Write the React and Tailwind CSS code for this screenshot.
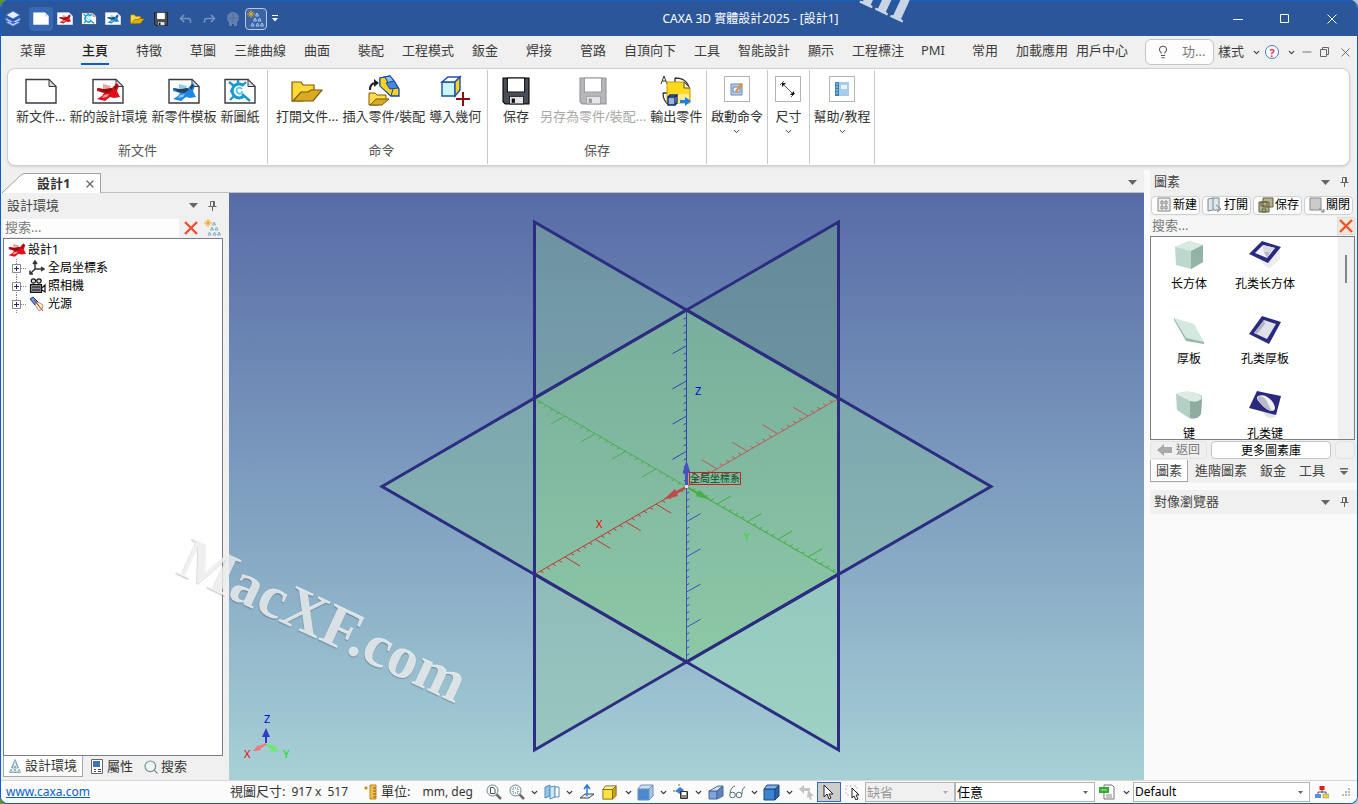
import { useState } from "react";
import { ChevronDown, Forward, Lightbulb, Minus, Reply, Search, X } from "lucide-react";

const TABS = [
  "菜單", "主頁", "特徵", "草圖", "三維曲線", "曲面", "裝配", "工程模式", "鈑金", "焊接", "管路",
  "自頂向下", "工具", "智能設計", "顯示", "工程標注", "PMI", "常用", "加載應用", "用戶中心",
];

/* ---------- small drawings ---------- */

function Page({ children, w = 32, h = 26, line = "#3a3a40" }) {
  return (
    <svg width={w} height={h} viewBox="0 0 32 26" fill="none">
      <path d="M1 1.5h23l7 7V25H1z" fill="#fff" stroke={line} strokeWidth="1.4" />
      <path d="M24 1.5v7h7z" fill="#d8dae0" stroke={line} strokeWidth="1" />
      {children}
    </svg>
  );
}

function Part({ main, dark, light }) {
  return (
    <g>
      <path d="M5 10l6 1 9-1 5-5 2 3-2 5 3 6-6 1-4-1-5 4-8-2 5-3 2-3-7-2z" fill={main} />
      <path d="M5 10l6 1 8-1 2 2-5 3-6-1z" fill={dark} />
      <path d="M11 6l8 2-1 2-7 1z" fill={light} />
      <path d="M12 17l5-1-2 3-5 1z" fill={light} />
      <path d="M24 6l2 2-3 4-1-3z" fill={dark} />
    </g>
  );
}

function RedPart() {
  return <Part main="#e01018" dark="#8c0f16" light="#f6a0a0" />;
}

function BluePart() {
  return <Part main="#1e88e8" dark="#2b4358" light="#8ccbf5" />;
}

function Gear() {
  return (
    <g stroke="#1a9bd0" fill="none">
      <path d="M19 7a7 7 0 1 0 1 11" strokeWidth="3" />
      <path d="M5 4l5 4M22 4l-4 4M6 22l4-4M26 23l-8-7M14 2v4M6 13h3" strokeWidth="2.4" />
      <path d="M18 11c-3-3-7 0-5 3s5 2 5-1" strokeWidth="1.8" stroke="#56c8ea" />
    </g>
  );
}

function Folder({ w = 32, h = 24 }) {
  return (
    <svg width={w} height={h} viewBox="0 0 32 24">
      <path d="M1 22V3h9l2 3h11v7L12 22z" fill="#ffd83a" stroke="#7a5b00" strokeWidth="1.2" />
      <path d="M2 22l8-9h7l3-2h11l-9 11z" fill="#d9ab20" stroke="#7a5b00" strokeWidth="1.2" />
    </svg>
  );
}

function Floppy({ size = 28, body = "#4b5058", line = "#0d0d10" }) {
  return (
    <svg width={size} height={size} viewBox="0 0 26 26">
      <path d="M1 1h24v24H3l-2-2z" fill={body} stroke={line} strokeWidth="1.2" />
      <path d="M5 1h16v13H5z" fill="#fff" stroke={line} />
      <path d="M7 18h13v7H7z" fill="#e4e6ea" stroke={line} strokeWidth=".8" />
      <path d="M9 20h3v4H9z" fill={line} />
    </svg>
  );
}

function InsertPart() {
  return (
    <svg width="32" height="32" viewBox="0 0 32 32">
      <path d="M2 15c0-5 2-7 6-7" fill="none" stroke="#222" strokeWidth="2" />
      <path d="M6 4l5 4-5 4z" fill="#222" />
      <path d="M12 3l10-2 4 5 5 8v7h-8L12 11z" fill="#ffd21e" stroke="#1148a8" strokeWidth="1.3" />
      <path d="M12 3l5-1 8 12-2 7L12 11z" fill="#ffd21e" stroke="#1148a8" />
      <path d="M17 2l5-1 4 5-6 2z" fill="#8fbcf4" stroke="#1148a8" />
      <path d="M18 8l8-2 4 7-8 1z" fill="#4a88e0" stroke="#1148a8" />
      <path d="M1 30V18h6l2 2h9v5l-8 5z" fill="#ffdd4a" stroke="#7a5b00" />
      <path d="M2 30l6-6h13l-7 6z" fill="#d9ab20" stroke="#7a5b00" />
    </svg>
  );
}

function ImportGeometry() {
  return (
    <svg width="32" height="32" viewBox="0 0 32 32">
      <path d="M3 7h13v14H3z" fill="#c8f6fb" stroke="#1e4fa8" strokeWidth="1.4" />
      <path d="M3 7l6-5h12l-5 5z" fill="#fff" stroke="#1e4fa8" strokeWidth="1.4" />
      <path d="M16 7l5-5v13l-5 6z" fill="#ffd21e" stroke="#1e4fa8" strokeWidth="1.4" />
      <path d="M24 17v14M17 24h14" stroke="#8c0f16" strokeWidth="2" />
    </svg>
  );
}

function ExportPart() {
  return (
    <svg width="32" height="32" viewBox="0 0 32 32">
      <path d="M1 9L4 1l3 8M2 6h4" fill="none" stroke="#333" />
      <path d="M15 3c8 0 13 4 14 10M3 18c0 6 3 10 6 12M3 18h4M15 3v4" fill="none" stroke="#333" strokeWidth="1.3" />
      <path d="M7 7h17l6 6v15H7z" fill="#ffd91c" stroke="#c79a00" />
      <path d="M8 19h21v9H8z" fill="#ffec90" />
      <path d="M24 7v6h6z" fill="#fff2a0" stroke="#555" />
      <path d="M8 22h7v8H8zM8 22l2-2h7l-2 2M17 20v8l-2 2" fill="#8fb5ea" stroke="#15265c" strokeWidth="1.3" />
      <path d="M20 25h5v-3l6 4-6 5v-3h-5z" fill="#1c7df0" />
    </svg>
  );
}

function Framed({ children }) {
  return (
    <span className="mb-1 flex size-[26px] items-center justify-center border border-[#b4b4b4] bg-white">
      {children}
    </span>
  );
}

function Hierarchy({ line = "#7fa7b5" }) {
  return (
    <svg width="12" height="14" viewBox="0 0 12 14" fill="none" stroke={line}>
      <path d="M6 .5L7.500 4h-3zM4.500 4L2.500 9M7.500 4l2 5M4.500 5.500L6 9H3zM7.500 5.500L9 9H6zM2 10l1.500 3.500h-3zM6 10l1.500 3.500h-3zM10 10l1.500 3.500h-3z" />
    </svg>
  );
}

function NewHierarchy({ line }) {
  return (
    <svg width="18" height="18" viewBox="0 0 18 18" fill="none">
      <path d="M4 0v8M0 4h8M1.500 1.500l5 5M6.500 1.500l-5 5" stroke="#e8a820" />
      <path d="M10 3l1.500 3h-3zM8 8l1.500 3h-3zM12.500 8l1.500 3h-3zM5.500 13l1.500 3H4zM10.500 13l1.500 3H9zM15 13l1.500 3h-3z" stroke={line} />
    </svg>
  );
}

function Caret({ className = "" }) {
  return (
    <svg className={className} width="9" height="5" viewBox="0 0 9 5">
      <path d="M0 0h9L4.500 5z" fill="#666" />
    </svg>
  );
}

function Pin() {
  return (
    <svg width="9" height="10" viewBox="0 0 9 10" fill="none" stroke="#666">
      <path d="M2.500.5h4v5M5.500.5v5M2.500.5v5M.5 5.500h8M4.500 5.500V10" />
    </svg>
  );
}

function Cube({ front, top, side, line, size = 17 }) {
  return (
    <svg width={size} height={size} viewBox="0 0 17 17">
      <path d="M1 5h11v11H1z" fill={front} stroke={line} />
      <path d="M1 5l3-4h12l-4 4z" fill={top} stroke={line} />
      <path d="M12 5l4-4v11l-4 4z" fill={side} stroke={line} />
    </svg>
  );
}

function Cross() {
  return (
    <svg width="14" height="14" viewBox="0 0 14 14">
      <path d="M1 1l12 12M13 1L1 13" stroke="#f4502f" strokeWidth="2.400" />
    </svg>
  );
}

/* ---------- title bar and menu ---------- */

function TitleBar() {
  return (
    <header className="flex h-9 shrink-0 items-center border-t border-[#1560c0] bg-[#2b579a] pl-1">
      <svg width="16" height="18" viewBox="0 0 16 18" className="mr-2">
        <path d="M8 1l7 4-7 4-7-4z" fill="#e8f0ff" stroke="#3c6df0" />
        <path d="M1 8l7 4 7-4v2l-7 4-7-4zM1 12l7 4 7-4" fill="#dfe9ff" stroke="#5a85f5" />
      </svg>
      <div className="flex items-center">
        <button aria-label="新文件" className="flex h-6 w-6 items-center justify-center rounded bg-[#3867b4]">
          <Page w={16} h={13} line="#dfe3ea" />
        </button>
        <button aria-label="新的設計環境" className="flex h-6 w-6 items-center justify-center">
          <Page w={16} h={13} line="#dfe3ea"><RedPart /></Page>
        </button>
        <button aria-label="新圖紙" className="flex h-6 w-6 items-center justify-center">
          <Page w={16} h={13}><Gear /></Page>
        </button>
        <button aria-label="新零件模板" className="flex h-6 w-6 items-center justify-center">
          <Page w={16} h={13} line="#dfe3ea"><BluePart /></Page>
        </button>
        <button aria-label="打開文件" className="flex h-6 w-6 items-center justify-center">
          <Folder w={15} h={12} />
        </button>
        <button aria-label="保存" className="flex h-6 w-6 items-center justify-center">
          <Floppy size={14} />
        </button>
        <button aria-label="撤銷" className="flex h-6 w-6 items-center justify-center text-[#7392c6]">
          <Reply size={15} strokeWidth={2.500} />
        </button>
        <button aria-label="重做" className="flex h-6 w-6 items-center justify-center text-[#7392c6]">
          <Forward size={15} strokeWidth={2.500} />
        </button>
        <button aria-label="渲染" className="flex h-6 w-6 items-center justify-center">
          <svg width="14" height="14" viewBox="0 0 14 14" fill="#6580b0">
            <circle cx="7" cy="6" r="6" />
            <path d="M3 9h3v5H3zM8 9h3v5H8z" />
            <path d="M7 1v9M1 6h12" stroke="#4a6ba5" />
          </svg>
        </button>
        <button aria-label="設計樹" className="flex size-[22px] items-center justify-center rounded border border-[#b9c8e4] bg-[#3a64a4]">
          <NewHierarchy line="#a8c8ec" />
        </button>
        <button aria-label="自定義" className="flex h-6 w-4 items-center justify-center">
          <svg width="6" height="7" viewBox="0 0 6 7" fill="#fff">
            <path d="M0 0h6v1H0zM0 3h6L3 6.500z" />
          </svg>
        </button>
      </div>
      <h1 className="grow pl-1 text-center text-[12px] text-white">CAXA 3D 實體設計2025 - [設計1]</h1>
      <div className="flex justify-end pr-0.5 text-white">
        <button aria-label="最小化" className="flex h-8 w-[47px] items-center justify-center">
          <svg width="10" height="10"><path d="M0 5.500h10" stroke="#fff" /></svg>
        </button>
        <button aria-label="最大化" className="flex h-8 w-[47px] items-center justify-center">
          <svg width="10" height="10"><path d="M.5.5h8v8h-8z" fill="none" stroke="#fff" /></svg>
        </button>
        <button aria-label="關閉" className="flex h-8 w-[47px] items-center justify-center">
          <svg width="10" height="10"><path d="M.5.5l9 9M9.500.5l-9 9" stroke="#fff" /></svg>
        </button>
      </div>
    </header>
  );
}

function tabWidth(name) {
  if (name === "PMI") return "w-[50px]";
  return name.length > 2 ? "w-[60px]" : "w-[54px]";
}

function MenuBar() {
  const [active, setActive] = useState("主頁");
  return (
    <nav className="flex h-8 shrink-0 items-center pl-[5px] text-[13px] text-[#3c3c3c]">
      {TABS.map((name) => (
        <button
          key={name}
          onClick={() => setActive(name)}
          className={`flex h-7 shrink-0 items-center justify-center whitespace-nowrap ${tabWidth(name)} ${
            name === "菜單" ? "mr-2" : ""
          } ${active === name ? "font-medium text-[#222]" : ""}`}
        >
          <span
            className={`flex h-[26px] items-center border-b-2 px-px ${
              active === name ? "border-[#0a5fc8]" : "border-transparent"
            }`}
          >
            {name}
          </span>
        </button>
      ))}
      <div className="ml-auto flex items-center pr-1">
        <button className="flex h-[26px] w-[69px] items-center gap-3 rounded-md border border-[#c4c4c4] bg-[#fdfdfd] pl-2.5 text-[#777]">
          <Lightbulb size={14} strokeWidth={1.800} className="shrink-0 text-[#555]" />
          功...
        </button>
        <button className="flex items-center gap-2 pl-1">
          樣式
          <ChevronDown size={9} strokeWidth={3} />
        </button>
        <button aria-label="幫助" className="ml-1 flex items-center gap-2">
          <span className="flex size-[14px] items-center justify-center rounded-full border border-[#4a78c0] bg-white text-[11px] font-bold leading-none text-[#e8323c]">
            ?
          </span>
          <ChevronDown size={9} strokeWidth={3} />
        </button>
        <button aria-label="最小化文檔" className="ml-1 text-[#666]"><Minus size={14} strokeWidth={1.500} /></button>
        <button aria-label="還原文檔" className="ml-1.5">
          <svg width="10" height="10" fill="none" stroke="#666">
            <path d="M.5 2.500h6v7h-6zM2.500 2.500v-2h6v7h-2" />
          </svg>
        </button>
        <button aria-label="關閉文檔" className="ml-2 text-[#666]"><X size={15} strokeWidth={1.500} /></button>
      </div>
    </nav>
  );
}

/* ---------- ribbon ---------- */

function RibbonButton({ icon, label, disabled, menu }) {
  return (
    <button
      disabled={disabled}
      className={`flex shrink-0 flex-col items-center whitespace-nowrap ${disabled ? "text-[#a8a8a8]" : "text-[#333]"}`}
    >
      <span className="flex h-8 items-center justify-center">{icon}</span>
      <span className="leading-[18px]">{label}</span>
      {menu && <ChevronDown size={9} strokeWidth={2.500} className="mt-0.5" />}
    </button>
  );
}

function RibbonGroup({ title, children, className }) {
  return (
    <section className={`flex shrink-0 flex-col justify-between border-r border-[#c9c9c9] pt-[5px] pb-[5px] ${className}`}>
      <div className="flex gap-1">{children}</div>
      {title && <h2 className="text-center leading-[18px] text-[#555]">{title}</h2>}
    </section>
  );
}

function Ribbon() {
  return (
    <div className="mr-[7px] ml-1.5 flex h-[98px] shrink-0 rounded-lg border border-[#cfcfcf] bg-white py-px text-[13px] shadow-sm">
      <RibbonGroup title="新文件" className="w-[260px] px-2">
        <RibbonButton icon={<Page />} label="新文件..." />
        <RibbonButton icon={<Page><RedPart /></Page>} label="新的設計環境" />
        <RibbonButton icon={<Page><BluePart /></Page>} label="新零件模板" />
        <RibbonButton icon={<Page><Gear /></Page>} label="新圖紙" />
      </RibbonGroup>
      <RibbonGroup title="命令" className="w-[220px] pl-2">
        <RibbonButton icon={<Folder />} label="打開文件..." />
        <RibbonButton icon={<InsertPart />} label="插入零件/裝配" />
        <RibbonButton icon={<ImportGeometry />} label="導入幾何" />
      </RibbonGroup>
      <RibbonGroup title="保存" className="w-[219px]">
        <div className="flex gap-1 pl-3.5">
          <span className="flex pr-1.5"><RibbonButton icon={<Floppy />} label="保存" /></span>
          <RibbonButton icon={<Floppy body="#b5b7ba" line="#9a9a9c" />} label="另存為零件/裝配..." disabled />
          <RibbonButton icon={<ExportPart />} label="輸出零件" />
        </div>
      </RibbonGroup>
      <RibbonGroup className="w-[61px] items-center">
        <RibbonButton
          menu
          label="啟動命令"
          icon={
            <Framed>
              <svg width="16" height="16" viewBox="0 0 16 16">
                <path d="M2 3h11v11H2z" fill="#b8cdec" stroke="#6b86b5" />
                <path d="M4 6h7v5H4z" fill="#e8f0fa" stroke="#6b86b5" />
                <path d="M6 10l6-8 2 1-6 8z" fill="#e8902a" />
              </svg>
            </Framed>
          }
        />
      </RibbonGroup>
      <RibbonGroup className="w-[42px] items-center">
        <RibbonButton
          menu
          label="尺寸"
          icon={
            <Framed>
              <svg width="16" height="16" viewBox="0 0 16 16" stroke="#555" fill="none">
                <path d="M3 3l10 10M0 4l4-4M11 16l4-4" />
                <path d="M2 2h4L2 6zM14 14h-4l4-4z" fill="#111" stroke="none" />
              </svg>
            </Framed>
          }
        />
      </RibbonGroup>
      <RibbonGroup className="w-[65px] items-center">
        <RibbonButton
          menu
          label="幫助/教程"
          icon={
            <Framed>
              <svg width="16" height="16" viewBox="0 0 16 16">
                <path d="M1 1h14v14H1z" fill="#a6cdea" />
                <path d="M1 1h4v14H1z" fill="#3d80b8" />
                <path d="M7 4h6v4H7z" fill="#e8f4fc" />
                <path d="M2 3h2M2 6h2M2 9h2M2 12h2" stroke="#c8e0f0" />
              </svg>
            </Framed>
          }
        />
      </RibbonGroup>
    </div>
  );
}

/* ---------- left panel ---------- */

function DocTabs() {
  return (
    <div className="flex h-5 shrink-0 items-stretch">
      <svg width="24" height="20" viewBox="0 0 24 20" className="shrink-0">
        <path d="M1 20L20 2q2-1.500 4-1.500V20z" fill="#fff" />
        <path d="M1 20L20 2q2-1.500 4-1.500" fill="none" stroke="#a0a0a0" />
      </svg>
      <div className="flex w-[76px] items-center justify-between border-t border-r border-[#a0a0a0] bg-white pr-1 pl-3 text-[13px] font-bold text-[#333]">
        設計1
        <button aria-label="關閉設計1"><X size={12} strokeWidth={2.500} className="text-[#666]" /></button>
      </div>
      <div className="flex grow items-center justify-end border-b border-[#c0c0c0] pr-[7px]"><Caret /></div>
    </div>
  );
}

function PanelHeader({ title, className }) {
  return (
    <div className={`flex shrink-0 items-center ${className}`}>
      <h2 className="grow text-[13px] text-[#444]">{title}</h2>
      <button aria-label={`${title}選單`} className="mr-2.5"><Caret /></button>
      <button aria-label={`固定${title}`} className="mr-1.5"><Pin /></button>
    </div>
  );
}

const TREE = [
  {
    name: "全局坐標系",
    icon: (
      <svg width="16" height="16" viewBox="0 0 16 16" fill="none" stroke="#333" strokeWidth="1.500">
        <path d="M6 1v8h9M6 9l-5 5M4 4l2-3 2 3M12 7l3 2-3 2M1 10.500V14h3" />
      </svg>
    ),
  },
  {
    name: "照相機",
    icon: (
      <svg width="17" height="16" viewBox="0 0 17 16" fill="none" stroke="#111" strokeWidth="1.200">
        <circle cx="4.500" cy="3" r="2.200" fill="#ddd" />
        <circle cx="10" cy="3" r="2.200" fill="#ddd" />
        <path d="M1.500 6.500h11v8h-11z" fill="#8a8a98" />
        <path d="M13 10l3-3v7l-3-2M3 9h8M3 12h8" />
      </svg>
    ),
  },
  {
    name: "光源",
    icon: (
      <svg width="16" height="16" viewBox="0 0 16 16">
        <path d="M1 3l3-2 5 5-3 3z" fill="#6a9cd8" stroke="#1d3a70" />
        <path d="M6 9l3-3 5 3q1 4-4 6z" fill="#fbeec0" stroke="#999" />
        <path d="M5 4l9 11" stroke="#d02020" />
      </svg>
    ),
  },
];

function DesignPanel() {
  return (
    <aside className="flex w-[228px] shrink-0 flex-col pr-1.5 pl-0.5 text-[#222]">
      <PanelHeader title="設計環境" className="h-[25px] pl-1" />
      <div className="flex h-5 shrink-0 items-center">
        <input
          aria-label="搜索設計環境"
          placeholder="搜索..."
          className="h-[18px] w-0 grow bg-[#fdfdfd] px-0.5 text-[13px] outline-none placeholder:text-[#777]"
        />
        <button aria-label="清除" className="flex w-6 justify-center"><Cross /></button>
        <button aria-label="新建" className="flex w-5 justify-center"><NewHierarchy line="#7fb0c0" /></button>
      </div>
      <ul className="grow border border-[#7d7d8a] bg-white pt-0.5 pl-1 text-[12px] text-black">
        <li className="flex h-[18px] items-center gap-0.5">
          <svg width="18" height="16" viewBox="4 4 24 20"><RedPart /></svg>
          設計1
        </li>
        {TREE.map((node) => (
          <li key={node.name} className="flex h-[18px] items-center pl-1">
            <button aria-label={`展開${node.name}`} className="mr-0.5">
              <svg width="15" height="18" viewBox="0 0 15 18" fill="none">
                <path d="M4.500 0v5M4.500 13v5M9 9.500h6" stroke="#888" strokeDasharray="1 1" />
                <path d="M.5 5.500h8v8h-8z" fill="#fff" stroke="#8a8a8a" />
                <path d="M2 9.500h5M4.500 7v5" stroke="#222d78" />
              </svg>
            </button>
            <span className="mr-0.5 flex w-[17px]">{node.icon}</span>
            {node.name}
          </li>
        ))}
      </ul>
      <div className="flex h-6 shrink-0 items-start text-[13px] text-[#333]">
        <button className="flex h-[21px] items-center gap-1 border border-t-0 border-[#a8a8a8] bg-white px-[5px]">
          <Hierarchy />
          設計環境
        </button>
        <button className="flex h-[21px] items-center gap-1 pl-2">
          <svg width="12" height="15" viewBox="0 0 12 15" fill="none">
            <path d="M.5.5h11v14H.5z" fill="#fff" stroke="#666" />
            <path d="M2 2h7v6H2z" fill="#3c72b8" />
            <path d="M3 10.500h2M7 10.500h3M3 12.500h2M7 12.500h3" stroke="#444" />
          </svg>
          屬性
        </button>
        <button className="flex h-[21px] items-center gap-0.5 pl-2.5">
          <Search size={16} className="fill-[#eef6f4] text-[#7a8f90]" strokeWidth={1.800} />
          搜索
        </button>
      </div>
    </aside>
  );
}

/* ---------- 3D view ---------- */

// Screen centre of the scene and the projected length of one major division.
const CX = 686.5;
const CY = 486.5;
const AXES = [
  { color: "#c05858", step: [30.4, -17.6], tick: [-15, -9] },
  { color: "#c03838", step: [-30.4, 17.6], tick: [15, 9] },
  { color: "#4caf50", step: [-30.4, -17.6], tick: [-14, 8] },
  { color: "#3cb03c", step: [30.4, 17.6], tick: [14, -8] },
  { color: "#3540b8", step: [0, -35.2], tick: [-14, 8] },
  { color: "#4050c0", step: [0, 35.2], tick: [14, -8] },
];

function axisPath({ step, tick }) {
  let d = `M${CX} ${CY}l${step[0] * 5} ${step[1] * 5}`;
  for (let i = 1; i < 25; i++) {
    const k = i % 5 === 0 ? 1 : 0.2;
    d += `M${CX + (step[0] * i) / 5} ${CY + (step[1] * i) / 5}l${tick[0] * k} ${tick[1] * k}`;
  }
  return d;
}

function Viewport() {
  return (
    <main className="min-w-0 grow bg-linear-to-b from-[#586ba6] to-[#a7d1d6]">
      <svg className="h-full w-full" viewBox="229 193 915 587" preserveAspectRatio="xMidYMid slice">
        <defs>
          <linearGradient id="core" x1="0" y1="0" x2="0" y2="1">
            <stop offset="0" stopColor="#78ae9c" />
            <stop offset="1" stopColor="#8dc8a6" />
          </linearGradient>
        </defs>
        <path d="M534 222L686.500 310L534 398z" fill="#7cae9e" fillOpacity=".55" />
        <path d="M838.500 222L686.500 310L838.500 398z" fill="#6a9694" fillOpacity=".7" />
        <path d="M534 398L382 486.500L534 574zM838.500 398L991 486.500L838.500 574z" fill="#85bba6" fillOpacity=".55" />
        <path d="M534 574L534 750L686.500 662z" fill="#92c4b0" fillOpacity=".6" />
        <path d="M838.500 574L838.500 750L686.500 662z" fill="#9ad4bc" fillOpacity=".7" />
        <path d="M686.500 310L838.500 398V574L686.500 662L534 574V398z" fill="url(#core)" />
        {AXES.map((axis, i) => (
          <path key={i} d={axisPath(axis)} stroke={axis.color} fill="none" />
        ))}
        <g fill="none" stroke="#2c2c80" strokeWidth="3">
          <path d="M534.500 222L838.500 398V750L534.500 574z" />
          <path d="M838.500 222L534.500 398V750L838.500 574z" />
          <path d="M382 486.500L686.500 310L991 486.500L686.500 662z" />
        </g>
        <path d="M685 486V473h-2.500l4-13 4 13H688v13z" fill="#4a50c0" />
        <path d="M686 486l-10 5-1-2-12 11 15-4-1-2 10-6z" fill="#c04848" />
        <path d="M687 486l11 6 1-2 12 10-15-4 1-2-11-6z" fill="#48b048" />
        <path d="M685 485h3v3h-3z" fill="#e8e0f8" />
        <path d="M689.500 472.500h51v12h-51z" fill="none" stroke="#c82020" />
        <text x="690" y="482" fontSize="10" fill="#0c4a1c">全局坐標系</text>
        <g fontSize="11">
          <text x="695" y="395" fill="#0000e0">Z</text>
          <text x="596" y="528" fill="#f00000">X</text>
          <text x="744" y="540" fontSize="9" fill="#20e020">Y</text>
          <text x="264" y="723" fill="#0000e0">Z</text>
          <text x="244" y="758" fill="#f00000">X</text>
          <text x="283" y="758" fill="#10e010">Y</text>
        </g>
        <path d="M265 743v-6h-3l4-9 4 9h-3v6z" fill="#3838c8" />
        <path d="M266 743l-7 3-1-1-5 6 8-1-1-1 6-4z" fill="#f07878" />
        <path d="M266 743l7 3 1-1 5 7-9-1 1-2-5-3z" fill="#70e870" />
      </svg>
    </main>
  );
}

/* ---------- right panel ---------- */

const SHAPES = [
  {
    name: "长方体",
    art: (
      <g>
        <path d="M2 7l14-6 14 4v17l-12 7L3 25z" fill="#bcd8cc" />
        <path d="M2 7l14-6 14 4-12 6z" fill="#d8ebe2" />
        <path d="M18 11l12-6v17l-12 7z" fill="#93b3a6" />
      </g>
    ),
  },
  {
    name: "孔类长方体",
    art: (
      <g>
        <path d="M10 20l10 9 11-10V9z" fill="#ececf0" />
        <path d="M0 14L13 1l19 6-13 16z" fill="#29297e" />
        <path d="M6 13l8-8 12 3-8 10z" fill="#f2f2f8" />
        <path d="M14 5l1 7 3 6 3-6 5-4z" fill="#b4b6c8" />
        <path d="M14 5l1 7 6 0 5-4z" fill="#d6d8e4" />
      </g>
    ),
  },
  {
    name: "厚板",
    art: (
      <g>
        <path d="M1 3l20 6 10 18v2L13 25z" fill="#d3e8de" />
        <path d="M1 3l12 20 18 4v2l-18-3L1 5z" fill="#98b8aa" />
      </g>
    ),
  },
  {
    name: "孔类厚板",
    art: (
      <g>
        <path d="M0 19L13 1l19 6-12 22z" fill="#29297e" />
        <path d="M5 18l10-13 12 4-9 15z" fill="#dfe0e8" />
        <path d="M5 18l10-13 1 4-8 10z" fill="#b0b2c4" />
      </g>
    ),
  },
  {
    name: "键",
    art: (
      <g>
        <path d="M3 4q12-5 22 0 5 1 4 5l-1 15q-4 6-12 4L4 20z" fill="#b4d0c4" />
        <path d="M3 4q12-5 22 0 5 3 2 6-5 3-10 1z" fill="#dcece5" />
        <path d="M17 11q7 2 12-2l-1 15q-4 6-11 4z" fill="#8eada0" />
      </g>
    ),
  },
  {
    name: "孔类键",
    art: (
      <g>
        <path d="M14 22q4 8 12 5l-2-6z" fill="#e0e0e4" />
        <path d="M0 18L8 1l24 5-5 19z" fill="#29297e" />
        <path d="M9 6q7-3 14 5 6 9 0 10-5 0-11-7-6-6-3-8z" fill="#f0f0f4" />
        <path d="M10 6q6 0 9 8 2 5 5 7-6 0-12-7-5-6-2-8z" fill="#b8bac8" />
      </g>
    ),
  },
];

const LIBRARY_ACTIONS = [
  { label: "新建", icon: <path d="M2 1h12v13H2zM5 4h2v3H5zM9 4h2v3H9zM5 9h2v3H5zM9 9h2v3H9z" fill="#eee" stroke="#888" /> },
  { label: "打開", icon: <path d="M1 2l5-1v12l-5 1zM6 1h6v12H6M9 8l5 4-4 3" fill="#dde6ec" stroke="#7c8a90" /> },
  { label: "保存", icon: <path d="M5 1h10v9H5zM1 5h10v10H1zM3 5h6v4H3zM4 12h4v3H4z" fill="#b8b48a" stroke="#5c5c40" /> },
  { label: "關閉", icon: <path d="M1 1h11v12H1zM10 11l5 4M12 15h3v-3" fill="#ccc" stroke="#8a8a8a" /> },
];

function LibraryPanel() {
  return (
    <aside className="flex w-[213px] shrink-0 flex-col bg-[#fafafa] pl-1.5">
      <div className="flex flex-col bg-[#f0f0f0] pr-0.5">
        <PanelHeader title="圖素" className="h-6 pl-1" />
        <div className="flex h-[22px] items-center gap-0.5 px-px">
          {LIBRARY_ACTIONS.map(({ label, icon }) => (
            <button
              key={label}
              className="flex h-[19px] w-[49px] items-center justify-end gap-px whitespace-nowrap rounded border border-[#d0d0d0] bg-[#fcfcfc] pr-0.5 text-[12px] text-black"
            >
              <svg width="16" height="16" viewBox="0 0 16 16" className="shrink-0">{icon}</svg>
              {label}
            </button>
          ))}
        </div>
        <div className="flex h-5 items-center">
          <input
            aria-label="搜索圖素"
            placeholder="搜索..."
            className="h-5 w-0 grow bg-[#f6f6f6] px-0.5 pb-0.5 text-[13px] outline-none placeholder:text-[#777]"
          />
          <button aria-label="清除" className="flex h-[18px] w-[18px] items-center justify-center border border-[#ddd] bg-[#f0e8dc]">
            <Cross />
          </button>
        </div>
        <div className="flex h-[204px] overflow-hidden border border-[#7d7d8a] bg-white">
          <ul className="grid w-[152px] grid-cols-2 content-start text-black">
            {SHAPES.map((shape) => (
              <li key={shape.name} className="flex h-[75px] flex-col items-center whitespace-nowrap pt-[3px] font-['Noto_Sans_CJK_SC',sans-serif] text-[12px]">
                <svg width="32" height="32" viewBox="0 0 32 32">{shape.art}</svg>
                <span className="mt-[3px] leading-4">{shape.name}</span>
              </li>
            ))}
          </ul>
          <div className="ml-auto flex w-4 justify-center bg-[#f0f0f0] pt-[18px]">
            <span className="h-7 w-0.5 bg-[#858585]" />
          </div>
        </div>
        <div className="flex h-5 items-center gap-1 text-[12px]">
          <button disabled className="flex h-[18px] w-[57px] items-center justify-center gap-1 rounded border border-[#e2e2e2] text-[#777]">
            <svg width="15" height="12" viewBox="0 0 15 12"><path d="M0 6l7-6v3h8v6H7v3z" fill="#aaa" /></svg>
            返回
          </button>
          <button className="h-[18px] w-[120px] rounded border border-[#c4c4c4] bg-white text-black">更多圖素庫</button>
          <span className="h-[18px] grow rounded border border-[#e2e2e2]" />
        </div>
        <div className="flex h-[23px] items-start text-[13px] text-[#444]">
          <button className="h-[22px] w-[38px] border border-t-0 border-[#a8a8a8] bg-white">圖素</button>
          <button className="h-[22px] w-[66px]">進階圖素</button>
          <button className="h-[22px] w-[38px]">鈑金</button>
          <button className="h-[22px] w-10">工具</button>
          <button aria-label="更多" className="flex h-[22px] grow items-center justify-center">
            <svg width="8" height="7" viewBox="0 0 8 7" fill="#666"><path d="M0 0h8v1.500H0zM0 3h8L4 7z" /></svg>
          </button>
        </div>
      </div>
      <PanelHeader title="對像瀏覽器" className="mt-[7px] h-6 bg-[#f0f0f0] pr-0.5 pl-1" />
    </aside>
  );
}

/* ---------- status bar ---------- */

function Tool({ label, wide, className = "", children }) {
  return (
    <button aria-label={label} className={`flex h-5 shrink-0 items-center justify-center ${wide ? "w-6" : "w-[21px]"} ${className}`}>
      {children}
    </button>
  );
}

function More({ label }) {
  return (
    <button aria-label={label} className="flex h-5 w-[14px] shrink-0 items-center justify-center text-[#333]">
      <ChevronDown size={9} strokeWidth={3.500} />
    </button>
  );
}

function Combo({ label, value, disabled, className }) {
  return (
    <label className={`relative flex h-5 items-center border border-[#b4b4b4] ${className}`}>
      <select
        aria-label={label}
        disabled={disabled}
        className={`h-full w-full appearance-none bg-transparent pl-px outline-none ${disabled ? "text-[#9a9a9a]" : "text-black"}`}
      >
        <option>{value}</option>
      </select>
      <svg width="5" height="3" viewBox="0 0 5 3" className="pointer-events-none absolute right-1.5">
        <path d="M0 0h5L2.500 3z" fill={disabled ? "#aaa" : "#666"} />
      </svg>
    </label>
  );
}

function Magnifier({ children }) {
  return (
    <svg width="16" height="16" viewBox="0 0 16 16" fill="none">
      <circle cx="6.500" cy="6.500" r="5.500" fill="#eef8f8" stroke="#6a8488" />
      <path d="M10.500 10.500l4.500 4.500" stroke="#6c6c6c" strokeWidth="2.500" />
      {children}
    </svg>
  );
}

function StatusBar() {
  return (
    <footer className="flex h-[23px] shrink-0 items-center border-t border-[#d8d8d8] bg-[#fbfbfb] text-[12px] text-[#333]">
      <div className="w-[229px] shrink-0 pl-[5px]">
        <a href="https://www.caxa.com" className="text-[#0a62c8] underline">www.caxa.com</a>
      </div>
      <div className="flex w-[134px] shrink-0 items-center whitespace-nowrap">
        <span className="mr-1.5 text-[13px]">視圖尺寸:</span>
        <span className="mr-[3px]">917</span>
        <span className="mr-1.5">x</span>
        <span>517</span>
      </div>
      <div className="flex w-[118px] shrink-0 items-center whitespace-nowrap">
        <svg width="13" height="16" viewBox="0 0 13 16" className="mr-1">
          <path d="M0 4l2-2 2 2-2 2z" fill="#c89020" />
          <path d="M6 1h6v14H6z" fill="#f2c050" stroke="#b88420" />
          <path d="M9 4h3M9 7h3M9 10h3M9 13h3" stroke="#8a5c10" />
        </svg>
        <span className="mr-3 text-[13px]">單位:</span>
        mm, deg
      </div>
      <Tool label="全部顯示" wide>
        <Magnifier><path d="M4.500 3.500h3l1.500 2v4h-4.500z" stroke="#555" fill="#fff" /></Magnifier>
      </Tool>
      <Tool label="縮放"><Magnifier><path d="M4 4h5v5H4z" stroke="#777" strokeDasharray="1 1" /></Magnifier></Tool>
      <More label="縮放選項" />
      <Tool label="截面">
        <svg width="16" height="16" viewBox="0 0 16 16" stroke="#5a8fb8">
          <path d="M1 3l5-2v11l-5 2z" fill="#8fc4e8" />
          <path d="M6 3l5-1v11l-5 2z" fill="#cfe6f4" />
          <path d="M11 3h4v10h-4z" fill="#fff" />
        </svg>
      </Tool>
      <More label="截面選項" />
      <Tool label="定向">
        <svg width="16" height="16" viewBox="0 0 16 16" fill="none">
          <path d="M1 14l5-4h9l-5 4z" stroke="#444" fill="#dceafa" />
          <path d="M8 12V2M5 5l3-4 3 4" stroke="#2878d0" strokeWidth="1.500" />
        </svg>
      </Tool>
      <Tool label="視向" wide><Cube front="#ffe23a" top="#fff3a0" side="#d0a800" line="#75641c" size={15} /></Tool>
      <More label="視向選項" />
      <Tool label="顯示樣式"><Cube front="#4a88d0" top="#cfe0f4" side="#a8c4e8" line="#6d8fb8" /></Tool>
      <More label="顯示樣式選項" />
      <Tool label="保存視向">
        <svg width="16" height="16" viewBox="0 0 16 16" fill="none">
          <path d="M0 7h2M6 0v2" stroke="#666" />
          <path d="M2 7l5-4 4 3-4 4z" fill="#3b7fd0" />
          <path d="M7.500 7.500h7v7h-7z" fill="#888" stroke="#333" />
          <path d="M9 8h4v3H9z" fill="#fff" />
        </svg>
      </Tool>
      <More label="保存視向選項" />
      <Tool label="透視">
        <svg width="16" height="16" viewBox="0 0 16 16" stroke="#4a6898">
          <path d="M1 7h8v8H1z" fill="#7fa4dc" />
          <path d="M1 7l9-5h5L9 7z" fill="#cfdff6" />
          <path d="M9 7l6-5v10l-6 3z" fill="#5c84c0" />
        </svg>
      </Tool>
      <Tool label="可見性">
        <svg width="16" height="14" viewBox="0 0 16 14" fill="none" stroke="#54707c">
          <circle cx="3.500" cy="10" r="2.800" />
          <circle cx="10" cy="10" r="2.800" />
          <path d="M1 8Q2 2 6 1M13 9q0-6 3-7" />
        </svg>
      </Tool>
      <More label="可見性選項" />
      <Tool label="渲染"><Cube front="#3b82d0" top="#7fb2ea" side="#2a62a8" line="#1d4880" /></Tool>
      <More label="渲染選項" />
      <Tool label="拾取">
        <svg width="16" height="16" viewBox="0 0 16 16" fill="#c4c4c4">
          <path d="M0 5l5-4v3h6v3H5v3zM9 6l6 6h-3l1 3-2 1-1-3-2 1z" />
        </svg>
      </Tool>
      <Tool label="選擇" wide className="border border-[#3a68b8] bg-[#cdcdcd]">
        <svg width="12" height="16" viewBox="0 0 12 16">
          <path d="M1 1v12l3-3 2 5 2-1-2-4h4z" fill="#fff" stroke="#222" />
        </svg>
      </Tool>
      <Tool label="框選" wide>
        <svg width="16" height="16" viewBox="0 0 16 16">
          <path d="M1 2h11v9H1z" fill="none" stroke="#bbb" strokeDasharray="2 2" />
          <path d="M7 4v10l2-2 2 4 2-1-2-4h3z" fill="#fff" stroke="#222" />
        </svg>
      </Tool>
      <Combo label="拾取過濾" value="缺省" disabled className="w-[90px] shrink-0 bg-[#f0f0f0] text-[13px]" />
      <Combo label="拾取類型" value="任意" className="w-[140px] shrink-0 bg-white text-[13px]" />
      <Tool label="樣式表" wide>
        <svg width="16" height="16" viewBox="0 0 16 16">
          <path d="M5 1h8l2 2v12H5z" fill="#fff" stroke="#777" />
          <path d="M0 3h10v6H0z" fill="#35a838" />
          <path d="M2 6h6" stroke="#b8f0b8" />
          <path d="M7 11h6M7 13h6" stroke="#888" />
        </svg>
      </Tool>
      <More label="樣式表選項" />
      <Combo label="配置" value="Default" className="min-w-0 grow bg-white" />
      <Tool label="結構" wide>
        <svg width="14" height="14" viewBox="0 0 14 14">
          <path d="M7 4v4M3 10V7h8v3" fill="none" stroke="#555" />
          <path d="M4.500 1h5v4h-5z" fill="#e02020" />
          <path d="M0 9h6v4H0z" fill="#5a90d8" />
          <path d="M8 9h6v4H8z" fill="#e8d040" stroke="#888" strokeWidth=".5" />
        </svg>
      </Tool>
      <svg width="9" height="9" viewBox="0 0 9 9" fill="#bbb" className="mr-1.5 ml-2 shrink-0">
        <path d="M6 0h2v2H6zM3 3h2v2H3zM6 3h2v2H6zM0 6h2v2H0zM3 6h2v2H3zM6 6h2v2H6z" />
      </svg>
    </footer>
  );
}

export default function App() {
  return (
    <div className="h-screen bg-linear-to-r from-[#5f9a1e] to-[#b8c4d0]">
      <div className="relative flex h-full flex-col overflow-hidden rounded-lg border-x border-b border-[#0a5fc8] bg-[#f0f0f0] font-['Noto_Sans','Noto_Sans_CJK_TC',sans-serif]">
        <TitleBar />
        <MenuBar />
        <Ribbon />
        <div className="flex min-h-0 grow pt-1">
          <div className="flex min-w-0 grow flex-col pt-[3px]">
            <DocTabs />
            <div className="flex min-h-0 grow">
              <DesignPanel />
              <Viewport />
            </div>
          </div>
          <LibraryPanel />
        </div>
        <StatusBar />
        <div className="pointer-events-none absolute top-[525px] left-[171px] origin-bottom-left rotate-25 font-['Liberation_Serif',serif] text-[60px] leading-[54px] font-bold text-white/75 [text-shadow:0_1px_1px_rgba(0,0,0,0.25)]">
          MacXF.com
        </div>
        <div className="pointer-events-none absolute -top-[46px] left-[854px] origin-bottom-left rotate-25 font-['Liberation_Serif',serif] text-[60px] leading-[54px] font-bold text-white/75">
          m
        </div>
      </div>
    </div>
  );
}
